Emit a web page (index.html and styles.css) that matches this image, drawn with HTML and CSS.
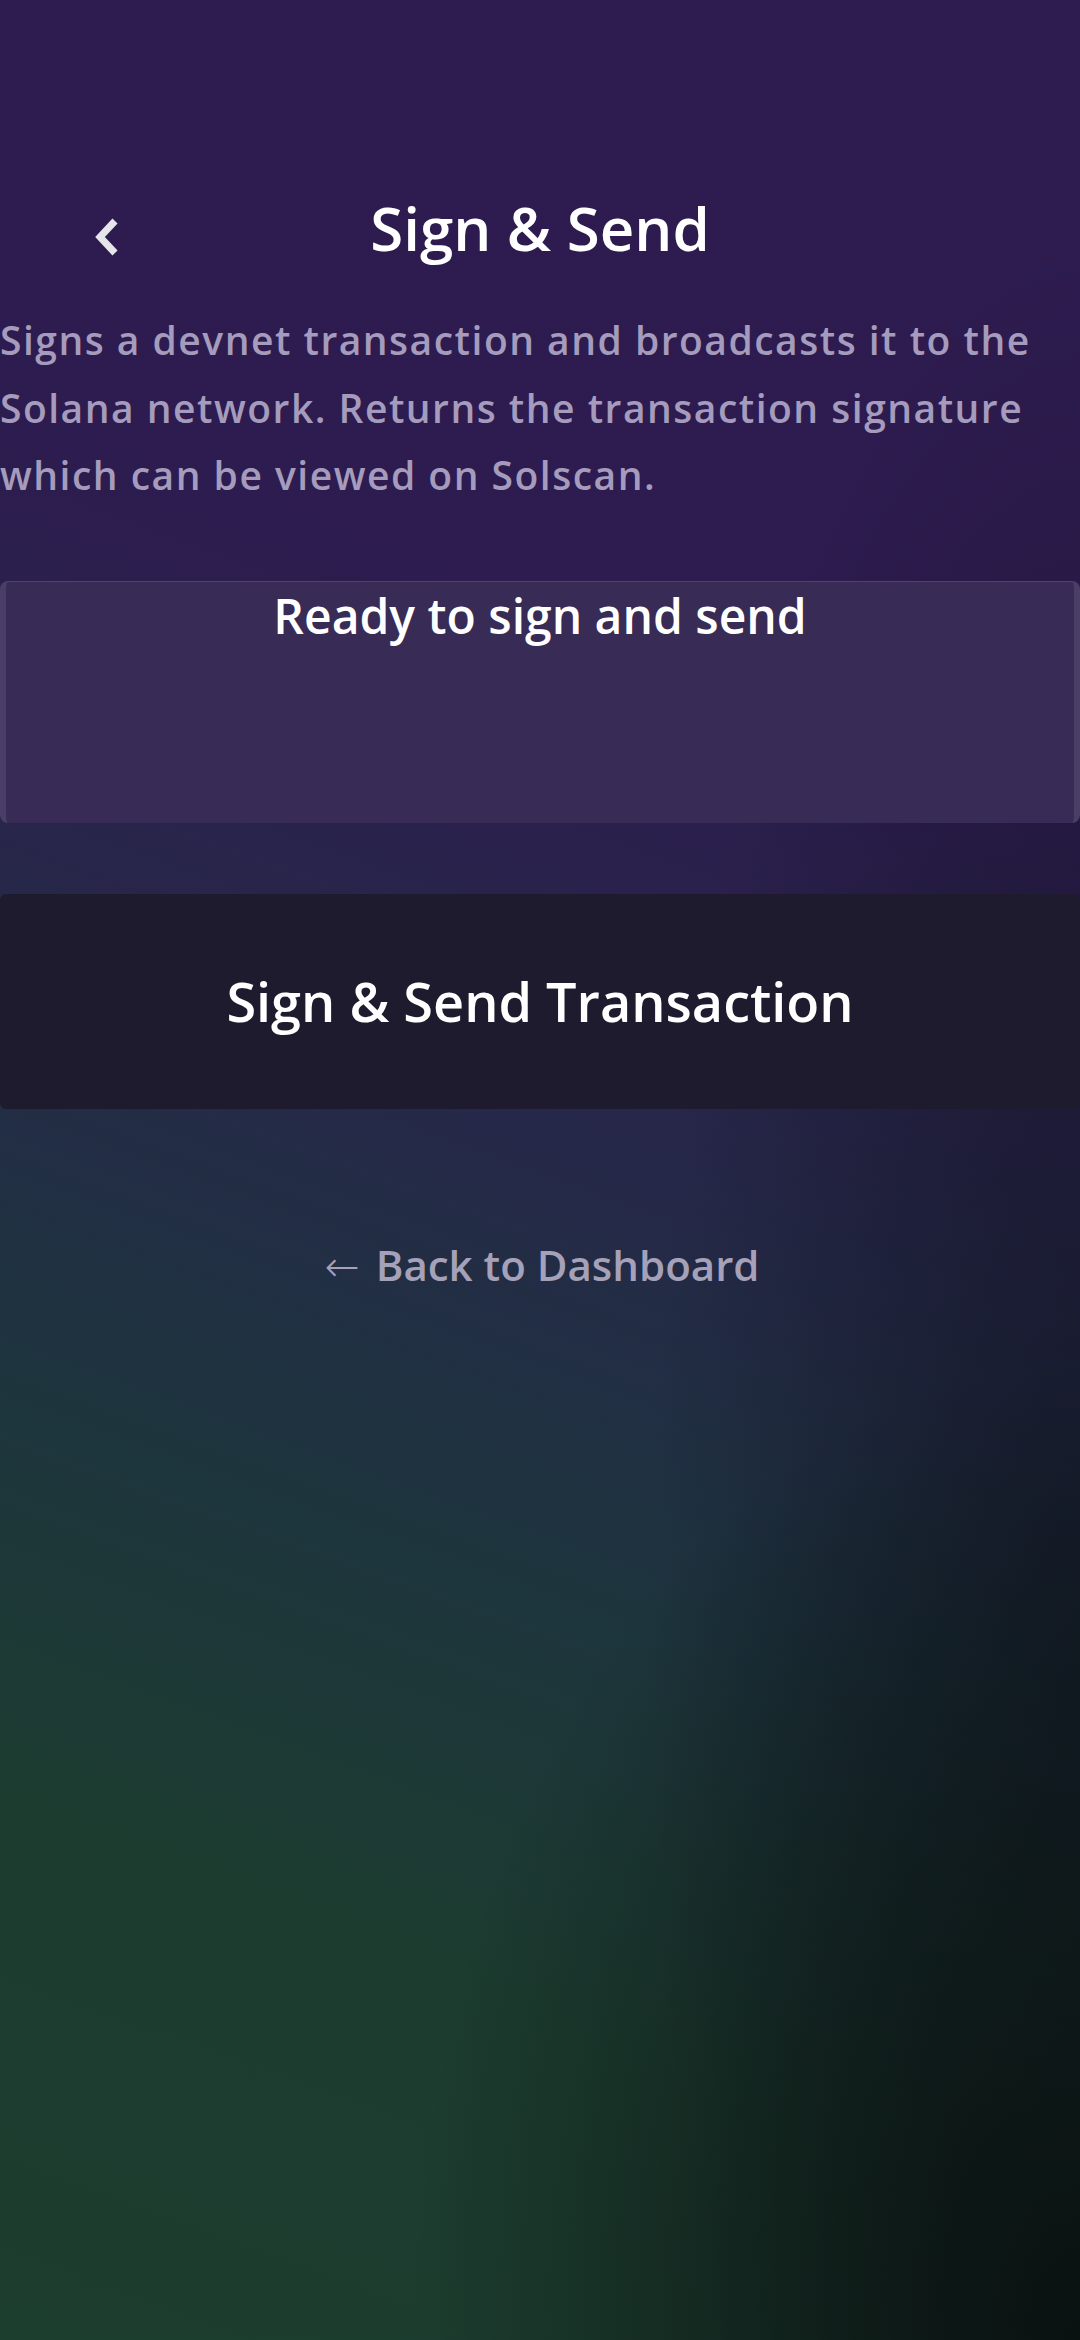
FILE: index.html
```html
<!DOCTYPE html>
<html lang="en">
<head>
<meta charset="utf-8">
<title>Sign &amp; Send</title>
<link rel="stylesheet" href="styles.css">
</head>
<body>
<div class="screen">
  <header class="topbar">
    <button class="back-btn" aria-label="Back">
      <svg class="chevron" viewBox="0 0 30 44" width="30" height="44">
        <polyline points="22,4 7,20 22,36" fill="none" stroke="#e6e5ea" stroke-width="7" stroke-linecap="butt" stroke-linejoin="miter"/>
      </svg>
    </button>
    <h1 class="title">Sign &amp; Send</h1>
    <span class="spacer"></span>
  </header>
  <p class="desc">Signs a devnet transaction and broadcasts it to the Solana network. Returns the transaction signature which can be viewed on Solscan.</p>
  <div class="status-card">
    <p class="status-text">Ready to sign and send</p>
  </div>
  <button class="primary-btn">Sign &amp; Send Transaction</button>
  <a class="back-link" href="#"><span class="arrow">←</span> Back to Dashboard</a>
</div>
</body>
</html>
```

FILE: styles.css
```css
html, body {
  margin: 0;
  padding: 0;
}
body {
  min-height: 2340px;
  font-family: "Open Sans", "Noto Sans", "DejaVu Sans", sans-serif;
  font-weight: 600;
  background:
    radial-gradient(ellipse 62% 42% at 100% 100%, rgba(9,16,15,0.95) 0%, rgba(9,16,15,0.6) 40%, rgba(9,16,15,0) 100%),
    radial-gradient(ellipse 40% 60% at 100% 70%, rgba(12,14,24,0.6) 0%, rgba(12,14,24,0) 100%),
    linear-gradient(200deg, #2e1b50 0%, #2d1c4f 30%, #262849 48%, #1e3340 62%, #1c3c30 80%, #1c3e2e 100%);
  color: #ffffff;
}
.screen {
  display: flex;
  flex-direction: column;
  min-height: 2340px;
}
.topbar {
  display: grid;
  grid-template-columns: 1fr auto 1fr;
  align-items: center;
  padding-top: 187px;
}
.back-btn {
  justify-self: start;
  margin-left: 93px;
  margin-top: 21px;
  padding: 0;
  border: 0;
  background: none;
  width: 30px;
  height: 44px;
  display: flex;
}
.chevron {
  display: block;
}
.title {
  margin: 0;
  font-size: 60px;
  line-height: 82px;
  font-weight: 600;
  color: #ffffff;
  text-align: center;
}
.desc {
  margin: 37px 0 0 0;
  font-size: 39px;
  line-height: 67.5px;
  letter-spacing: 1.5px;
  color: #a59bbd;
}
.status-card {
  margin-top: 72px;
  height: 242px;
  box-sizing: border-box;
  background: #382b56;
  border-top: 1px solid #4e4270;
  border-left: 6px solid #4a3e67;
  border-right: 6px solid #4a3e67;
  border-radius: 8px;
  padding-top: 2px;
}
.status-text {
  margin: 0;
  font-size: 48px;
  line-height: 64px;
  text-align: center;
  color: #ffffff;
}
.primary-btn {
  margin-top: 71px;
  height: 215px;
  border: 0;
  border-radius: 6px;
  background: #1f1b2e;
  color: #ffffff;
  font-family: inherit;
  font-weight: 600;
  font-size: 54px;
  padding: 0;
}
.back-link {
  margin-top: 127px;
  align-self: center;
  margin-left: 4px;
  font-size: 42px;
  line-height: 57px;
  color: #a5a1b9;
  text-decoration: none;
}
.arrow {
  font-family: "Noto Sans", "DejaVu Sans", sans-serif;
  font-weight: 300;
  font-size: 42px;
  margin-right: 5px;
}
```
